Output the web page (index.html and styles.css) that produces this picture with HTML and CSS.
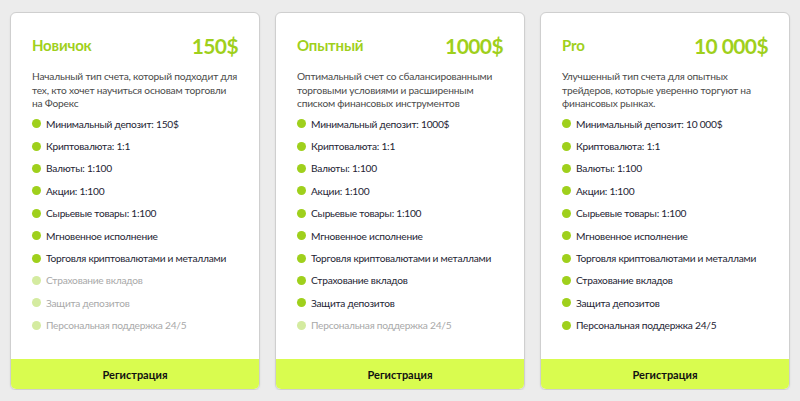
FILE: index.html
```html
<!DOCTYPE html>
<html lang="ru">
<head>
<meta charset="utf-8">
<link rel="stylesheet" href="styles.css">
</head>
<body>
<div class="plans">
  <div class="card">
    <div class="body">
      <div class="head"><span class="name">Новичок</span><span class="price">150$</span></div>
      <p class="desc">Начальный тип счета, который подходит для тех, кто хочет научиться основам торговли на&nbsp;Форекс</p>
      <ul class="list">
        <li>Минимальный депозит: 150$</li>
        <li>Криптовалюта: 1:1</li>
        <li>Валюты: 1:100</li>
        <li>Акции: 1:100</li>
        <li>Сырьевые товары: 1:100</li>
        <li>Мгновенное исполнение</li>
        <li>Торговля криптовалютами и металлами</li>
        <li class="off">Страхование вкладов</li>
        <li class="off">Защита депозитов</li>
        <li class="off">Персональная поддержка 24/5</li>
      </ul>
    </div>
    <a class="btn">Регистрация</a>
  </div>
  <div class="card">
    <div class="body">
      <div class="head"><span class="name">Опытный</span><span class="price">1000$</span></div>
      <p class="desc">Оптимальный счет со сбалансированными торговыми условиями и расширенным списком финансовых инструментов</p>
      <ul class="list">
        <li>Минимальный депозит: 1000$</li>
        <li>Криптовалюта: 1:1</li>
        <li>Валюты: 1:100</li>
        <li>Акции: 1:100</li>
        <li>Сырьевые товары: 1:100</li>
        <li>Мгновенное исполнение</li>
        <li>Торговля криптовалютами и металлами</li>
        <li>Страхование вкладов</li>
        <li>Защита депозитов</li>
        <li class="off">Персональная поддержка 24/5</li>
      </ul>
    </div>
    <a class="btn">Регистрация</a>
  </div>
  <div class="card">
    <div class="body">
      <div class="head"><span class="name">Pro</span><span class="price">10 000$</span></div>
      <p class="desc">Улучшенный тип счета для опытных трейдеров, которые уверенно торгуют на финансовых рынках.</p>
      <ul class="list">
        <li>Минимальный депозит: 10 000$</li>
        <li>Криптовалюта: 1:1</li>
        <li>Валюты: 1:100</li>
        <li>Акции: 1:100</li>
        <li>Сырьевые товары: 1:100</li>
        <li>Мгновенное исполнение</li>
        <li>Торговля криптовалютами и металлами</li>
        <li>Страхование вкладов</li>
        <li>Защита депозитов</li>
        <li>Персональная поддержка 24/5</li>
      </ul>
    </div>
    <a class="btn">Регистрация</a>
  </div>
</div>
</body>
</html>
```
FILE: styles.css
```css
html, body {
  margin: 0;
  padding: 0;
  background: #ececec;
  font-family: "Lato", "Noto Sans", sans-serif;
}
.plans {
  display: flex;
  gap: 15px;
  padding: 12px 10px 0 10px;
}
.card {
  width: 250px;
  height: 378px;
  box-sizing: border-box;
  background: #fff;
  border: 1px solid #cfcfcf;
  border-radius: 6px;
  display: flex;
  flex-direction: column;
  overflow: hidden;
  box-shadow: 0 1px 2px rgba(0,0,0,0.08);
}
.body {
  padding: 21px 21px 0 21px;
  flex: 1;
}
.head {
  display: flex;
  justify-content: space-between;
  align-items: center;
  height: 22px;
}
.name {
  color: #9fd01c;
  font-weight: 700;
  font-size: 15px;
  letter-spacing: -0.2px;
}
.price {
  color: #9fd01c;
  font-weight: 700;
  font-size: 21px;
  letter-spacing: -0.6px;
}
.desc {
  margin: 14px 0 0 0;
  font-size: 10.2px;
  line-height: 13.5px;
  letter-spacing: -0.2px;
  color: #4a4a4a;
}
.list {
  list-style: none;
  margin: 2px 0 0 0;
  padding: 0;
}
.list li {
  display: flex;
  align-items: center;
  height: 22.4px;
  font-size: 10.2px;
  letter-spacing: -0.25px;
  white-space: nowrap;
  color: #1d2433;
}
.list li::before {
  content: "";
  width: 9px;
  height: 9px;
  border-radius: 50%;
  background: #9fd01c;
  margin-right: 5px;
  flex: none;
}
.list li.off {
  color: #a9a9a9;
}
.list li.off::before {
  background: #d4eba0;
}
.btn {
  display: flex;
  align-items: center;
  justify-content: center;
  height: 30px;
  background: #d9fc4f;
  color: #111;
  font-weight: 700;
  font-size: 11px;
}
```
